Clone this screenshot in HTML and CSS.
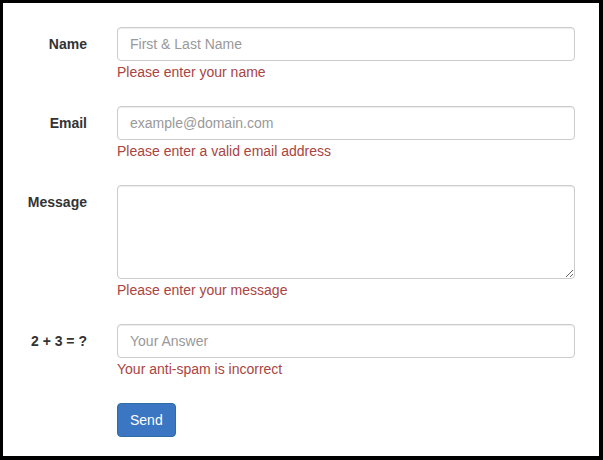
FILE: index.html
```html
<!DOCTYPE html>
<html lang="en">
<head>
<meta charset="utf-8">
<title>Contact form</title>
<link rel="stylesheet" href="styles.css">
</head>
<body>
<div class="frame">
  <form class="form">
    <div class="group">
      <label class="label" for="name">Name</label>
      <div class="field">
        <input class="control" id="name" type="text" placeholder="First &amp; Last Name">
        <p class="help">Please enter your name</p>
      </div>
    </div>
    <div class="group">
      <label class="label" for="email">Email</label>
      <div class="field">
        <input class="control" id="email" type="email" placeholder="example@domain.com">
        <p class="help">Please enter a valid email address</p>
      </div>
    </div>
    <div class="group">
      <label class="label" for="message">Message</label>
      <div class="field">
        <textarea class="control area" id="message" rows="4"></textarea>
        <p class="help">Please enter your message</p>
      </div>
    </div>
    <div class="group">
      <label class="label" for="human">2 + 3 = ?</label>
      <div class="field">
        <input class="control" id="human" type="text" placeholder="Your Answer">
        <p class="help">Your anti-spam is incorrect</p>
      </div>
    </div>
    <div class="group">
      <span></span>
      <div class="field">
        <button class="btn" type="button">Send</button>
      </div>
    </div>
  </form>
</div>
</body>
</html>
```
FILE: styles.css
```css
* {
  box-sizing: border-box;
}

html, body {
  margin: 0;
  padding: 0;
  background: #fff;
}

body {
  font-family: "Liberation Sans", Arial, sans-serif;
  font-size: 14px;
  line-height: 20px;
  color: #333;
}

.frame {
  width: 603px;
  height: 460px;
  border-style: solid;
  border-color: #000;
  border-width: 3px 4px 4px 3px;
  background: #fff;
  overflow: hidden;
}

.form {
  padding: 24px 24px 0 0;
  margin: 0;
}

.group {
  display: grid;
  grid-template-columns: 84px 1fr;
  column-gap: 30px;
  margin-bottom: 24px;
}

.label {
  text-align: right;
  font-weight: bold;
  padding-top: 7px;
  line-height: 20px;
  color: #333;
}

.field {
  display: flex;
  flex-direction: column;
  align-items: flex-start;
}

.control {
  display: block;
  width: 100%;
  height: 34px;
  padding: 6px 12px;
  font-family: inherit;
  font-size: 14px;
  line-height: 20px;
  color: #555;
  background: #fff;
  border: 1px solid #ccc;
  border-radius: 4px;
  box-shadow: inset 0 1px 1px rgba(0, 0, 0, 0.075);
  margin: 0;
  outline: none;
}

.control::placeholder {
  color: #999;
}

.area {
  height: 94px;
  resize: vertical;
}

.help {
  margin: 1px 0 0;
  line-height: 20px;
  color: #a94442;
}

.btn {
  height: 34px;
  padding: 6px 12px;
  font-family: inherit;
  font-size: 14px;
  line-height: 20px;
  color: #fff;
  background: #3a76c2;
  border: 1px solid #2e6da4;
  border-radius: 4px;
  margin: 0;
}
```
